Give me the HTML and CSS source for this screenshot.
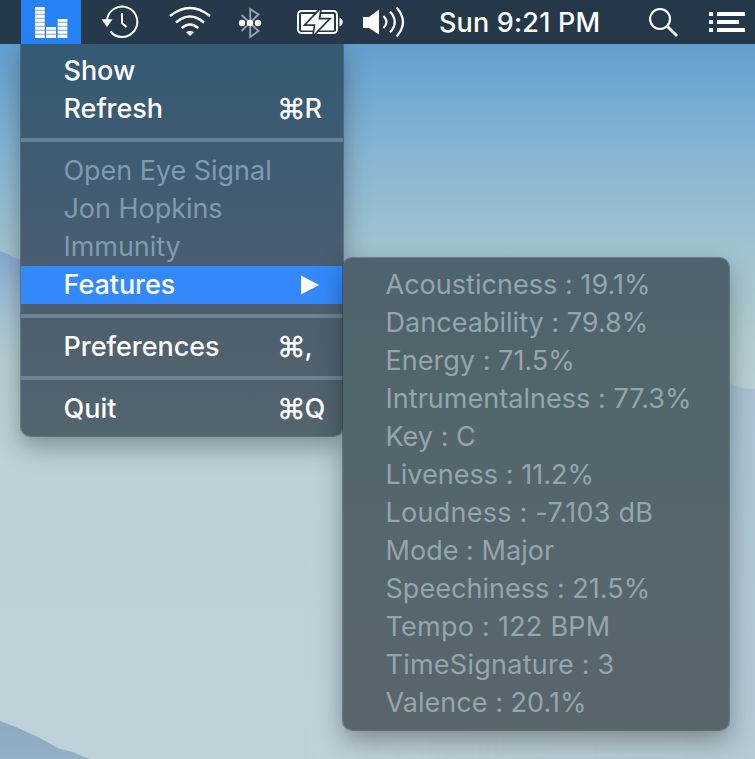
FILE: index.html
```
<!DOCTYPE html>
<html lang="en">
<head>
<meta charset="utf-8">
<title>Menu bar</title>
<link rel="stylesheet" href="styles.css">
</head>
<body>
<svg class="wallpaper" viewBox="0 0 755 759" preserveAspectRatio="none" aria-hidden="true">
  <defs>
    <linearGradient id="sky" x1="0" y1="0" x2="0" y2="1">
      <stop offset="0" stop-color="#5f9acb"/>
      <stop offset=".06" stop-color="#649fce"/>
      <stop offset=".2" stop-color="#86b5d2"/>
      <stop offset=".33" stop-color="#a1c3d0"/>
      <stop offset=".45" stop-color="#b4cdcf"/>
      <stop offset=".55" stop-color="#bcd1d7"/>
      <stop offset="1" stop-color="#c1d1d9"/>
    </linearGradient>
    <linearGradient id="hillRight" x1="0" y1="0" x2="0" y2="1">
      <stop offset="0" stop-color="#a9c0d2"/>
      <stop offset=".3" stop-color="#aec6d4"/>
      <stop offset="1" stop-color="#b6cad3"/>
    </linearGradient>
    <linearGradient id="hillLeft" x1="0" y1="0" x2="0" y2="1">
      <stop offset="0" stop-color="#86a9d4"/>
      <stop offset=".3" stop-color="#9bbbd6"/>
      <stop offset="1" stop-color="#bcd0d8" stop-opacity="0"/>
    </linearGradient>
    <linearGradient id="hillFront" x1="0" y1="0" x2="0" y2="1">
      <stop offset="0" stop-color="#8caac3"/>
      <stop offset="1" stop-color="#94b0c7"/>
    </linearGradient>
    <linearGradient id="fadeIn" x1="0" y1="0" x2="1" y2="0">
      <stop offset="0" stop-color="#000"/>
      <stop offset=".85" stop-color="#fff"/>
    </linearGradient>
    <mask id="hillMask"><rect x="300" y="340" width="455" height="419" fill="url(#fadeIn)"/></mask>
  </defs>
  <rect width="755" height="759" fill="url(#sky)"/>
  <path d="M0 251L8 254L14 258L21 259L80 290V380H0Z" fill="url(#hillLeft)"/>
  <path d="M300 350L729 383L742 388L755 389V759H300Z" fill="url(#hillRight)" mask="url(#hillMask)"/>
  <path d="M0 721L18 728L38 737L60 749L73 752L89 759H0Z" fill="url(#hillFront)"/>
</svg>

<header class="menubar">
  <div class="app-item">
    <svg width="60" height="44" viewBox="0 0 60 44" fill="#fff">
      <path d="M14 7h9.700v31h-9.700zM25 27h10v11h-10zM36.700 19h9.600v19h-9.600z" opacity=".45"/>
      <path d="M14 7h9.700v2.700h-9.700zM14 11h9.700v2.700h-9.700zM14 15h9.700v2.700h-9.700zM14 19h9.700v2.700h-9.700zM14 23h9.700v2.700h-9.700zM14 27h9.700v2.700h-9.700zM14 31h9.700v2.700h-9.700zM14 35h9.700v3h-9.700z"/>
      <path d="M25 27h10v2.700h-10zM25 31h10v2.700h-10zM25 35h10v3h-10z"/>
      <path d="M36.700 19h9.600v2.700h-9.600zM36.700 23h9.600v2.700h-9.600zM36.700 27h9.600v2.700h-9.600zM36.700 31h9.600v2.700h-9.600zM36.700 35h9.600v3h-9.600z"/>
    </svg>
  </div>
  <svg class="status" width="358" height="44" viewBox="81 0 358 44" fill="none" stroke="#fff">
    <g stroke-width="2">
      <path d="M107 20A15.200 15.200 0 1 1 110.400 31.500"/>
      <path d="M122 13V23L126.500 27"/>
      <path d="M101.500 19.300H112.500L107 27Z" fill="#fff" stroke="none"/>
    </g>
    <g stroke-width="2.500">
      <path d="M170 16Q190 0 210 16"/>
      <path d="M176 22.500Q190 10.500 204 22.500"/>
      <path d="M181.700 28Q190 21 198.300 28"/>
      <path d="M186 32.300Q190 29.500 194 32.300L190 36Z" fill="#fff" stroke="none"/>
    </g>
    <path d="M241.500 15L258.500 31L250.200 37V9L258.500 14.500L241.500 31" stroke="#94a2af" stroke-width="1.900"/>
    <g fill="#fff" stroke="none"><circle cx="242" cy="23" r="3.200"/><circle cx="250" cy="23" r="3.200"/><circle cx="258" cy="23" r="3.200"/></g>
    <rect x="298" y="11" width="39" height="22" rx="3.500" stroke-width="2"/>
    <rect x="301" y="14" width="33" height="16.500" rx="1" fill="#fff" stroke="none"/>
    <path d="M339.500 17.500Q342.700 18.500 342.700 22T339.500 26.500Z" fill="#fff" stroke="none"/>
    <path d="M320 10L306.500 24.300H315.500L314 34L328 19.500H318.500Z" fill="#fff" stroke="#25384a" stroke-width="3.400"/>
    <path d="M320 10L306.500 24.300H315.500L314 34L328 19.500H318.500Z" fill="#fff" stroke="none"/>
    <path d="M363 17H369L379 9.500V34.500L369 28H363Z" fill="#fff" stroke="none"/>
    <path d="M383.500 16Q389.500 22 383.500 28M390 11.500Q399.500 22 390 32.500M396.500 7.500Q409.500 22 396.500 36.500" stroke-width="2.200"/>
  </svg>
  <span class="clock">Sun 9:21 PM</span>
  <svg class="right-icons" width="106" height="44" viewBox="649 0 106 44" fill="none" stroke="#fff">
    <circle cx="660" cy="19" r="10" stroke-width="2.200"/>
    <path d="M667.500 26.500L677 36" stroke-width="2.800"/>
    <path d="M709 12h4v4h-4zM709 20h4v4h-4zM709 28h4v4h-4zM717 12h28v4h-28zM717 20h22v4h-22zM717 28h28v4h-28z" fill="#fff" stroke="none"/>
  </svg>
</header>

<nav class="menu main-menu">
  <div class="item"><span>Show</span></div>
  <div class="item"><span>Refresh</span><kbd><i class="cmd">⌘</i>R</kbd></div>
  <hr>
  <div class="item off"><span>Open Eye Signal</span></div>
  <div class="item off"><span>Jon Hopkins</span></div>
  <div class="item off"><span>Immunity</span></div>
  <div class="item active"><span>Features</span><svg class="arrow" width="18" height="20" viewBox="0 0 18 20"><path d="M0 .5L18 10L0 19.500Z" fill="#fff"/></svg></div>
  <hr>
  <div class="item"><span>Preferences</span><kbd><i class="cmd">⌘</i>,</kbd></div>
  <hr>
  <div class="item"><span>Quit</span><kbd><i class="cmd">⌘</i>Q</kbd></div>
</nav>

<section class="menu submenu">
  <div class="item off"><span>Acousticness : 19.1%</span></div>
  <div class="item off"><span>Danceability : 79.8%</span></div>
  <div class="item off"><span>Energy : 71.5%</span></div>
  <div class="item off"><span>Intrumentalness : 77.3%</span></div>
  <div class="item off"><span>Key : C</span></div>
  <div class="item off"><span>Liveness : 11.2%</span></div>
  <div class="item off loose"><span>Loudness : -7.103 dB</span></div>
  <div class="item off"><span>Mode : Major</span></div>
  <div class="item off"><span>Speechiness : 21.5%</span></div>
  <div class="item off loose"><span>Tempo : 122 BPM</span></div>
  <div class="item off loose"><span>TimeSignature : 3</span></div>
  <div class="item off"><span>Valence : 20.1%</span></div>
</section>
</body>
</html>
```
FILE: styles.css
```
* { box-sizing: border-box; }
body {
  margin: 0;
  width: 755px;
  height: 759px;
  overflow: hidden;
  position: relative;
  font-family: Inter, "Liberation Sans", sans-serif;
  font-size: 27px;
  color: #fff;
}
svg { display: block; flex: none; }
.wallpaper { position: absolute; inset: 0; width: 755px; height: 759px; }
.menubar {
  position: relative;
  z-index: 1;
  display: flex;
  align-items: center;
  height: 44px;
  padding-left: 21px;
  background: linear-gradient(90deg, #243a4a, #26384b 35%, #233849);
}
.app-item { width: 60px; height: 44px; background: #2680f6; }
.clock {
  width: 210px;
  font-weight: 500;
  letter-spacing: 0.17px;
  line-height: 45px;
  white-space: nowrap;
}
.menu {
  position: absolute;
  padding: 8px 0;
  box-shadow: 0 0 0 1px rgba(30, 50, 60, .4), 0 10px 26px rgba(0, 0, 0, .34);
}
.main-menu {
  left: 21px;
  top: 44px;
  width: 322px;
  height: 392px;
  border-radius: 0 0 9px 9px;
  font-weight: 450;
  background: linear-gradient(#345a74, #3e5b72 28%, #475d72 52%, #4e606e 70%, #52646d);
}
.submenu {
  left: 343px;
  top: 258px;
  width: 386px;
  height: 472px;
  border-radius: 9px;
  background: linear-gradient(#4f626d, #52656c 25%, #57656c 55%, #58666c);
}
.item {
  display: flex;
  align-items: center;
  position: relative;
  height: 38px;
  padding-left: 42.500px;
  line-height: 38px;
  white-space: nowrap;
}
.item span { letter-spacing: -0.04px; }
.submenu .item span { letter-spacing: 0.03px; }
.submenu .loose span { letter-spacing: 0.25px; }
.off { color: #809bb0; font-weight: 400; }
.submenu .off { color: #95a5ad; }
.active { background: #3389fb; }
kbd {
  display: flex;
  width: 66px;
  margin-left: auto;
  font: inherit;
}
.cmd {
  width: 27.500px;
  font-size: 29px;
  font-style: normal;
  font-weight: 500;
}
.arrow { margin-left: auto; margin-right: 24px; }
hr {
  height: 4px;
  margin: 10px 0;
  border: 0;
  background: rgba(150, 178, 196, .45);
}
```
